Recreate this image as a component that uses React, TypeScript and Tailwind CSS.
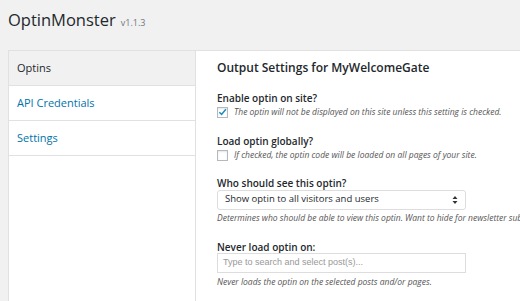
import React from "react";

export default function App() {
  return (
    <div className="w-[520px] h-[301px] bg-[#f1f1f1] overflow-hidden font-['Open_Sans',sans-serif] text-[#23282d]">
      <div className="h-[50px] pl-2 pt-[8px] flex items-baseline">
        <span className="text-[16.5px] leading-[24px]">OptinMonster</span>
        <span className="ml-[5px] text-[9px] text-[#72777c]">v1.1.3</span>
      </div>
      <div className="ml-2 flex h-[251px] border-l border-t border-[#e1e1e1]">
        <div className="w-[187px] shrink-0 bg-white border-r border-[#e1e1e1] flex flex-col">
          <div className="h-[35px] bg-[#f1f1f1] border-b border-[#e1e1e1] flex items-center px-2 text-[11px]">
            Optins
          </div>
          <div className="h-[35px] border-b border-[#e1e1e1] flex items-center px-2 text-[11px] text-[#0073aa]">
            API Credentials
          </div>
          <div className="h-[35px] border-b border-[#e1e1e1] flex items-center px-2 text-[11px] text-[#0073aa]">
            Settings
          </div>
        </div>
        <div className="flex-1 min-w-0 overflow-hidden bg-white pl-[21px] pt-[7px] flex flex-col">
          <div className="text-[12px] font-semibold leading-[20px]">Output Settings for MyWelcomeGate</div>
          <div className="mt-[13px] text-[10px] font-semibold leading-[14px]">Enable optin on site?</div>
          <div className="mt-[1px] flex items-center gap-[6px]">
            <div className="w-[11px] h-[11px] border border-[#b4b9be] bg-white flex items-center justify-center shadow-[inset_0_1px_2px_rgba(0,0,0,0.1)]">
              <svg width="10" height="10" viewBox="0 0 10 10">
                <path d="M1.5 5.2 L4 7.6 L8.8 2" fill="none" stroke="#1e8cbe" strokeWidth="1.6" />
              </svg>
            </div>
            <span className="text-[8.5px] italic text-[#555] whitespace-nowrap">
              The optin will not be displayed on this site unless this setting is checked.
            </span>
          </div>
          <div className="mt-[15px] text-[10px] font-semibold leading-[14px]">Load optin globally?</div>
          <div className="mt-[1px] flex items-center gap-[6px]">
            <div className="w-[11px] h-[11px] border border-[#b4b9be] bg-white shadow-[inset_0_1px_2px_rgba(0,0,0,0.1)]" />
            <span className="text-[8.5px] italic text-[#555] whitespace-nowrap">
              If checked, the optin code will be loaded on all pages of your site.
            </span>
          </div>
          <div className="mt-[14px] text-[10px] font-semibold leading-[14px]">Who should see this optin?</div>
          <div className="mt-[0px] w-[249px] h-[20px] border border-[#ddd] rounded-[3px] flex items-center justify-between pl-[7px] pr-[7px] text-[9.5px]">
            <span>Show optin to all visitors and users</span>
            <svg width="6" height="10" viewBox="0 0 6 10">
              <path d="M0.5 4 L3 1 L5.5 4 Z M0.5 6 L3 9 L5.5 6 Z" fill="#333" />
            </svg>
          </div>
          <div className="mt-[1px] text-[8.5px] italic text-[#555] whitespace-nowrap leading-[14px]">
            Determines who should be able to view this optin. Want to hide for newsletter subscribers?
          </div>
          <div className="mt-[16px] text-[10px] font-semibold leading-[12px]">Never load optin on:</div>
          <div className="mt-[0px] w-[249px] h-[20px] border border-[#ddd] flex items-center pl-[5px] font-['Liberation_Sans',sans-serif] text-[9px] text-[#999]">
            Type to search and select post(s)...
          </div>
          <div className="mt-[2px] text-[8.5px] italic text-[#555] whitespace-nowrap leading-[14px]">
            Never loads the optin on the selected posts and/or pages.
          </div>
        </div>
      </div>
    </div>
  );
}
